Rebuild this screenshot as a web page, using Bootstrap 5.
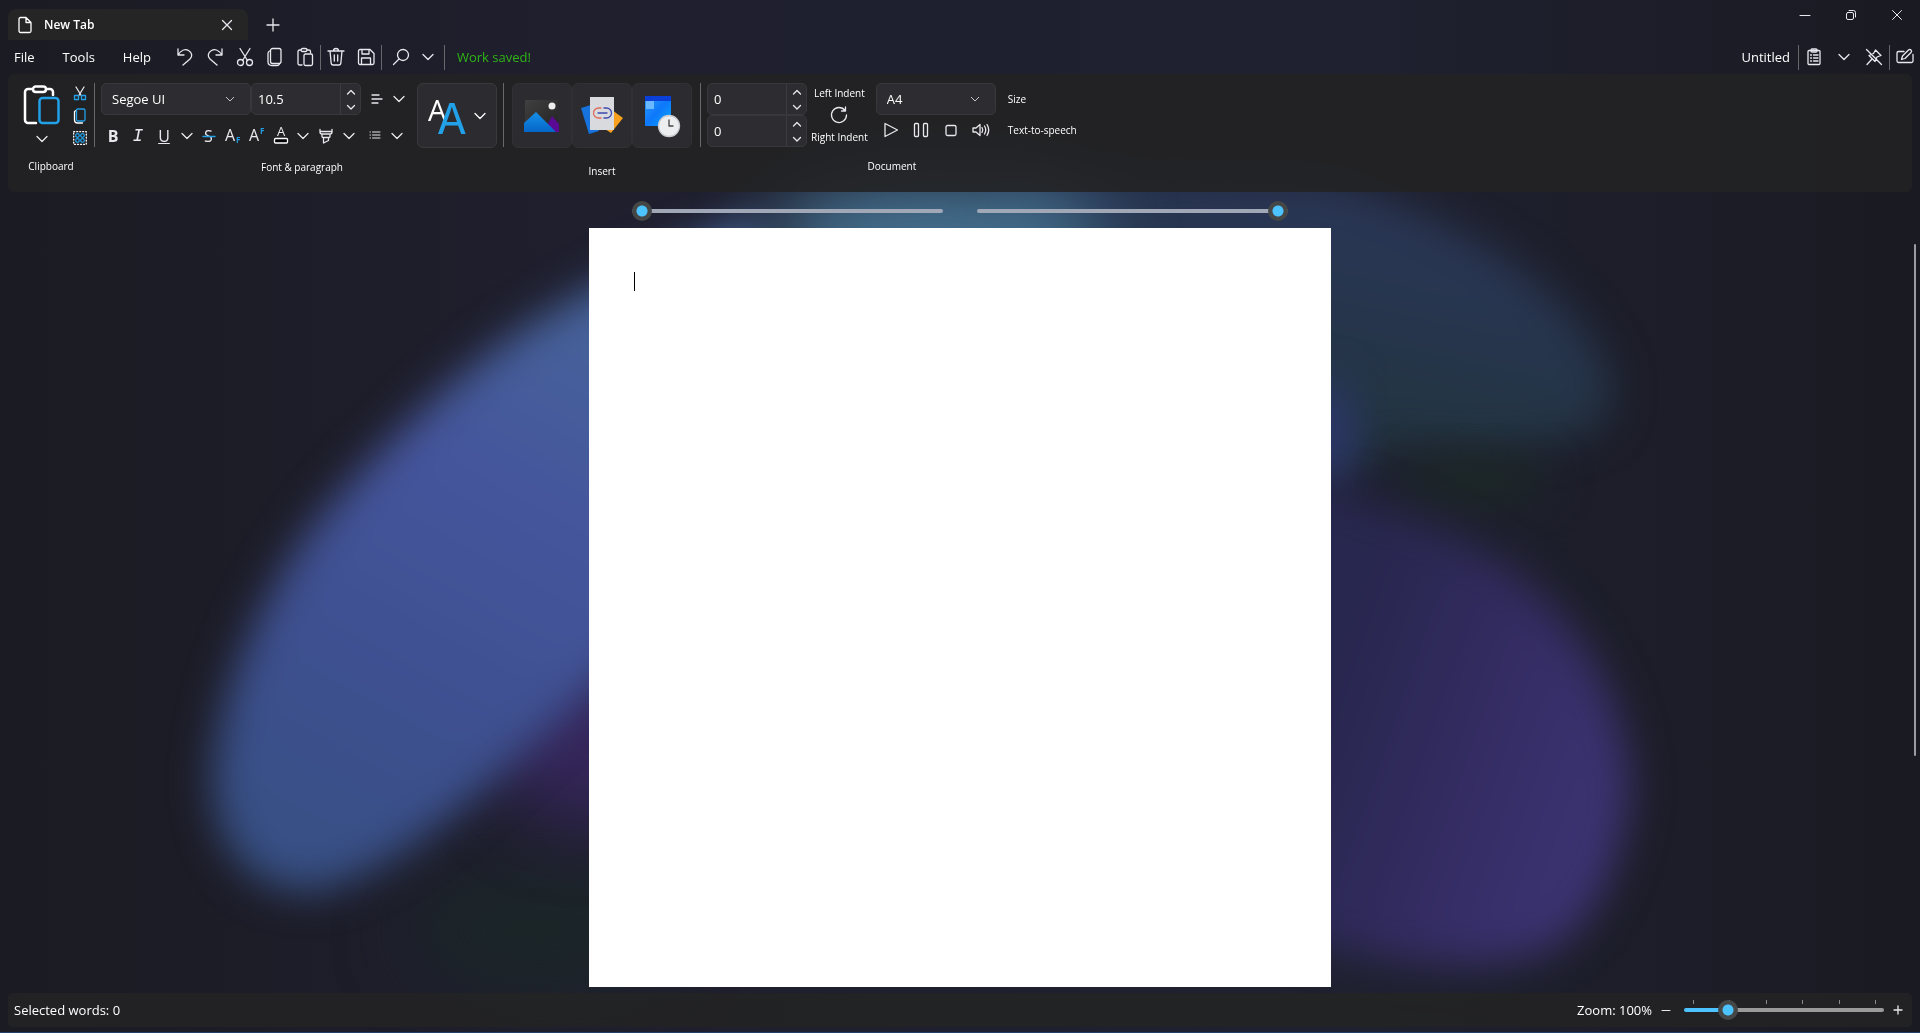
<!DOCTYPE html>
<html lang="en" data-bs-theme="dark">
<head>
<meta charset="utf-8">
<meta name="viewport" content="width=device-width, initial-scale=1">
<title>Untitled</title>
<link rel="stylesheet" href="https://cdn.jsdelivr.net/npm/bootstrap@5.3.0/dist/css/bootstrap.min.css">
<style>
:root{--accent:#4cc2ff;--blue:#22a0e8;--line:#68686c}
body{font-family:"Open Sans","Noto Sans",sans-serif;font-size:13px;line-height:20px;color:#fff;background:#1c1c26;overflow:hidden}
svg{display:block;fill:none;stroke:currentColor;stroke-width:1.3;stroke-linecap:round;stroke-linejoin:round;overflow:visible}
svg.flat,.flat text,svg text{stroke:none}
svg.bold-line{stroke-width:2.5}
svg.thin-line{stroke-width:1}
.backdrop{z-index:-1}
.backdrop svg{stroke:none}
.tool{background:none;border:0;padding:0;color:#e8e8ee;display:flex;align-items:center;justify-content:center;width:30px;height:30px;flex:none}
.tool:hover{background:#ffffff14}
.w-slim{width:24px}
.w-mid{width:26px}
.w-chev{width:20px}
.w-win{width:46px}
.rule{width:1px;background:var(--line);flex:none}
.titlebar{height:40px;padding-left:8px}
.doc-tab{width:240px;height:31px;background:#252525;border-radius:8px 8px 0 0;padding:0 6px 0 10px;font-size:12px;font-weight:600}
.menubar{height:34px;padding-left:14px}
.menubar .rule{height:25px}
.menubar a{color:#fff;text-decoration:none}
.menu-end{margin-right:19px}
.saved{color:#2fb516}
.ribbon{margin:0 8px;height:118px;background:#232324e4;border-radius:6px;padding:9px 0 0 8px}
.group-body{height:64px}
.group-rows{gap:6px}
.group-tight{padding-left:6px}
.clip-tools{padding:0 2px 0 8px}
.caption{font-size:10px;line-height:14px;padding-top:12px;text-align:center}
.tiny{font-size:10px;line-height:14px}
.field{background-color:#2d2d31;border:1px solid #38383c;color:#fff;font-size:13px;line-height:20px;border-radius:5px}
.field:focus{background-color:#2d2d31;box-shadow:none;border-color:#38383c;color:#fff}
select.field{height:32px;padding:0 10px;background-image:url("data:image/svg+xml,%3Csvg xmlns='http://www.w3.org/2000/svg' viewBox='0 0 10 10'%3E%3Cpath d='M1 3l4 4 4-4' fill='none' stroke='%23c4c4c8'/%3E%3C/svg%3E");background-size:10px;background-position:right 15px center}
.font-pick{width:150px}
.size-pick{width:120px}
.spin{height:32px;overflow:hidden;flex:none}
.spin input{background:none;border:0;color:#fff;width:100%;min-width:0;padding:0 6px;outline:0;appearance:textfield;-moz-appearance:textfield}
.spin input::-webkit-inner-spin-button{display:none}
.spin .steps{width:20px;border-left:1px solid #3c3c40;flex:none}
.spin .tool{width:100%;height:15px}
.spin-font{width:110px}
.spin-indent{width:100px}
.tile{background:#2c2c30;border:1px solid #313135;border-radius:6px;color:#fff;padding:0;display:flex;align-items:center;justify-content:center;width:60px;height:65px}
.tile-styles{width:80px;border-color:#3a3a3e;margin:0 6px 0 4px}
.glyph{font-size:16px;line-height:18px}
.glyph-i{font-family:"Liberation Mono",monospace;font-style:italic;font-size:18px}
.workspace{min-height:0;padding:0 8px}
.indents{gap:34px;height:36px;padding-top:9px}
input[type=range]{appearance:none;-webkit-appearance:none;background:none;height:20px;margin:0;display:block}
input[type=range]::-webkit-slider-runnable-track{height:4px;border-radius:2px;background:var(--track)}
input[type=range]::-webkit-slider-thumb{-webkit-appearance:none;width:20px;height:20px;margin-top:-8px;border-radius:50%;border:0;background:radial-gradient(circle,var(--accent) 5px,#454747 6px)}
.indent{width:311px;--track:#a0a8b8}
.zoom{width:200px;--track:linear-gradient(90deg,var(--accent) 24%,#9a9a9a 24%)}
.ticks{left:9px;right:8px;top:0;height:4px}
.ticks i{width:1px;height:4px;background:#8a8a8a}
.sheet{width:742px;background:#fff;padding:44px 45px;color:#000}
.caret{border-left:1px solid #000;height:19px;width:1px}
.scroll-thumb{right:4px;top:52px;width:2px;height:512px;background:#9c9ca2;border-radius:1px;position:absolute}
.status{margin:6px 8px 5px;height:34px;background:#232324e8;border-radius:5px;padding:0 4px 0 6px}
.bottom-line{height:1px;background:#22406c}
.status .tool{width:20px}
</style>
<script src="https://cdn.jsdelivr.net/npm/bootstrap@5.3.0/dist/js/bootstrap.bundle.min.js"></script>
</head>
<body class="vh-100 d-flex flex-column">

<svg class="d-none">
  <symbol id="chev" viewBox="0 0 12 12"><path d="M1 3.500l5 5 5-5"/></symbol>
  <symbol id="chev-s" viewBox="0 0 12 12"><path d="M2.500 4.500l3.500 3.500 3.500-3.500"/></symbol>
  <symbol id="up-s" viewBox="0 0 12 12"><path d="M2.500 8l3.500-3.500 3.500 3.500"/></symbol>
  <symbol id="close" viewBox="0 0 12 12"><path d="M1.500 1.500l9 9M10.500 1.500l-9 9"/></symbol>
  <symbol id="cut" viewBox="0 0 18 20"><path d="M4 1.500l7.500 12M14 1.500L6.500 13.500"/><circle cx="4.500" cy="15.500" r="3"/><circle cx="13.500" cy="15.500" r="3"/></symbol>
  <symbol id="copy" viewBox="0 0 18 20"><path d="M3.500 4C2.500 4.500 2 5.200 2 6.500v8c0 2.500 1.500 4 4 4h5c1.200 0 2-.5 2.500-1.500"/><rect x="4.500" y="1.500" width="10.500" height="15" rx="2"/></symbol>
  <symbol id="paste" viewBox="0 0 18 20"><path d="M6 18H3.500A1.500 1.500 0 0 1 2 16.500v-12A1.500 1.500 0 0 1 3.500 3H5M11 3h2a1.500 1.500 0 0 1 1.500 1.500V6"/><rect x="5" y="1.500" width="6" height="3" rx="1.500"/><rect x="8" y="7" width="8.500" height="11.500" rx="1.500"/></symbol>
</svg>

<!-- Blurred flower wallpaper behind the translucent window -->
<div class="backdrop position-fixed top-0 start-0 w-100 h-100">
<svg width="100%" height="100%" viewBox="0 0 1920 1033" preserveAspectRatio="none">
  <defs>
    <filter id="soft" x="-40%" y="-60%" width="180%" height="220%" color-interpolation-filters="sRGB"><feGaussianBlur stdDeviation="21"/></filter>
    <filter id="wide" x="-80%" y="-100%" width="260%" height="300%" color-interpolation-filters="sRGB"><feGaussianBlur stdDeviation="36"/></filter>
    <linearGradient id="base"><stop offset="0" stop-color="#1b1b23"/><stop offset=".3" stop-color="#1f1f2e"/><stop offset=".7" stop-color="#1f2130"/><stop offset="1" stop-color="#1a1a22"/></linearGradient>
    <linearGradient id="petal" gradientUnits="userSpaceOnUse" x1="600" y1="330" x2="300" y2="880"><stop offset="0" stop-color="#46629a"/><stop offset=".3" stop-color="#45559c"/><stop offset=".65" stop-color="#3e5090"/><stop offset="1" stop-color="#375084"/></linearGradient>
    <linearGradient id="violet" gradientUnits="userSpaceOnUse" x1="1330" y1="700" x2="1620" y2="800"><stop offset="0" stop-color="#28274f"/><stop offset=".5" stop-color="#342c62"/><stop offset="1" stop-color="#3c3474"/></linearGradient>
    <linearGradient id="teal" gradientUnits="userSpaceOnUse" x1="1480" y1="260" x2="1440" y2="450"><stop offset="0" stop-color="#293654"/><stop offset="1" stop-color="#223440"/></linearGradient>
  </defs>
  <rect width="1920" height="1033" fill="url(#base)"/>
  <ellipse cx="540" cy="930" rx="130" ry="60" fill="#1b2628" filter="url(#wide)"/>
  <ellipse cx="600" cy="740" rx="110" ry="85" fill="#35265a" filter="url(#wide)"/>
  <path d="M760 215Q600 275 500 345Q395 425 310 530Q220 660 213 780Q217 885 310 892Q380 880 482 790L620 665L760 500z" fill="url(#petal)" filter="url(#soft)"/>
  <path d="M1000 170L1330 180Q1460 220 1540 285Q1640 375 1600 425Q1520 465 1400 445L1300 480L1000 400z" fill="url(#teal)" filter="url(#soft)"/>
  <ellipse cx="935" cy="235" rx="170" ry="55" fill="#467494" filter="url(#wide)"/>
  <ellipse cx="1322" cy="435" rx="36" ry="56" fill="#2c3768" filter="url(#soft)"/>
  <ellipse cx="1475" cy="480" rx="75" ry="26" fill="#1c2727" filter="url(#soft)"/>
  <path d="M1280 480Q1400 500 1500 562Q1622 650 1630 790Q1615 905 1557 945Q1480 990 1280 935z" fill="url(#violet)" filter="url(#soft)"/>
</svg>
</div>

<header>
  <div class="titlebar d-flex align-items-end">
    <div class="doc-tab d-flex align-items-center">
      <svg width="14" height="18" viewBox="0 0 14 18"><path d="M2.500 1.500H8l5 5V15a1.500 1.500 0 0 1-1.500 1.500h-9A1.500 1.500 0 0 1 1 15V3a1.500 1.500 0 0 1 1.500-1.500zM8 1.500v5h5"/></svg>
      <span class="flex-grow-1 ps-2 ms-1">New Tab</span>
      <button class="tool" aria-label="Close tab"><svg width="12" height="12"><use href="#close"/></svg></button>
    </div>
    <button class="tool ms-2 ps-1" aria-label="New tab"><svg width="14" height="14" viewBox="0 0 14 14"><path d="M7 1v12M1 7h12"/></svg></button>
    <div class="ms-auto align-self-start d-flex">
      <button class="tool w-win" aria-label="Minimize"><svg class="thin-line" width="12" height="12" viewBox="0 0 12 12"><path d="M1 6.500h10"/></svg></button>
      <button class="tool w-win" aria-label="Restore"><svg class="thin-line" width="12" height="12" viewBox="0 0 12 12"><rect x="1.500" y="3.500" width="7" height="7" rx="1.500"/><path d="M4 1.500h4.500a2 2 0 0 1 2 2V8"/></svg></button>
      <button class="tool w-win" aria-label="Close"><svg class="thin-line" width="12" height="12"><use href="#close"/></svg></button>
    </div>
  </div>

  <nav class="menubar d-flex align-items-center">
    <a href="#">File</a><a href="#" class="ps-4 ms-1">Tools</a><a href="#" class="ps-4 ms-1 menu-end">Help</a>
    <button class="tool" aria-label="Undo"><svg width="18" height="20" viewBox="0 0 18 20"><path d="M2 2v6h6M2.300 7.500C5 3.500 9 1.500 12.500 3.500c4 2.300 4 6 1.500 8.500l-7 6"/></svg></button>
    <button class="tool" aria-label="Redo"><svg width="18" height="20" viewBox="0 0 18 20"><path d="M16 2v6h-6M15.700 7.500C13 3.500 9 1.500 5.500 3.500c-4 2.300-4 6-1.500 8.500l7 6"/></svg></button>
    <button class="tool" aria-label="Cut"><svg width="18" height="20"><use href="#cut"/></svg></button>
    <button class="tool" aria-label="Copy"><svg width="18" height="20"><use href="#copy"/></svg></button>
    <button class="tool" aria-label="Paste"><svg width="18" height="20"><use href="#paste"/></svg></button>
    <div class="rule"></div>
    <button class="tool" aria-label="Delete"><svg width="18" height="20" viewBox="0 0 18 20"><path d="M1 4h16M3 4l1.200 12.500a2 2 0 0 0 2 1.500h5.600a2 2 0 0 0 2-1.500L15 4M6.500 4a2.500 2.500 0 0 1 5 0M7.300 8v6M10.700 8v6"/></svg></button>
    <button class="tool" aria-label="Save"><svg width="18" height="20" viewBox="0 0 18 20"><path d="M3 2.500h10l4 4V16a1.500 1.500 0 0 1-1.500 1.500h-13A1.500 1.500 0 0 1 1.500 16V4A1.500 1.500 0 0 1 3 2.500zM5 2.500v4.500h7V2.500M4.500 17.500V11h9v6.500"/></svg></button>
    <div class="rule"></div>
    <button class="tool ms-1" aria-label="Find"><svg width="18" height="18" viewBox="0 0 18 18"><circle cx="11" cy="7" r="5.500"/><path d="M7 11l-5.500 5.500"/></svg></button>
    <button class="tool w-slim" aria-label="Find options"><svg width="12" height="12"><use href="#chev"/></svg></button>
    <div class="rule ms-1"></div>
    <span class="saved ms-2 ps-1">Work saved!</span>
    <span class="ms-auto me-2">Untitled</span>
    <div class="rule"></div>
    <button class="tool" aria-label="Notes"><svg width="16" height="18" viewBox="0 0 16 18"><rect x="2" y="2.500" width="12" height="14" rx="1"/><rect x="5" y="1" width="6" height="3" rx="1"/><path d="M4.500 7h1M7.500 7H12M4.500 10h1M7.500 10H12M4.500 13h1M7.500 13H12"/></svg></button>
    <button class="tool" aria-label="Notes options"><svg width="12" height="12"><use href="#chev"/></svg></button>
    <button class="tool" aria-label="Unpin"><svg width="18" height="18" viewBox="0 0 18 18"><path d="M1.500 1.500l15 15M10.500 2l5.500 5.500-4 1.500-2 4.500-6-6L8.500 5.500zM7 11l-5 5.500"/></svg></button>
    <div class="rule"></div>
    <button class="tool" aria-label="Edit mode"><svg width="18" height="18" viewBox="0 0 18 18"><path d="M8 3.500H2.500A1.500 1.500 0 0 0 1 5v8a1.500 1.500 0 0 0 1.500 1.500h13A1.500 1.500 0 0 0 17 13V6.500M5.500 11.500l1-3.500 6-6a1.500 1.500 0 0 1 2.500 2.500L9 10.500z"/></svg></button>
  </nav>
</header>

<section class="ribbon d-flex align-items-start">
  <div>
    <div class="group-body d-flex">
      <button class="tool h-100 flex-column w-auto ps-2 gap-2" aria-label="Paste">
        <svg class="bold-line" width="36" height="40" viewBox="0 0 36 40"><path d="M12 38H4a3 3 0 0 1-3-3V7a3 3 0 0 1 3-3h4M22 4h4a3 3 0 0 1 3 3v3" stroke="#fff"/><rect x="9" y="1.500" width="13" height="5.500" rx="2.700" stroke="#fff"/><rect x="15.500" y="13" width="19" height="25" rx="3" stroke="#22a0e8"/></svg>
        <svg width="12" height="12"><use href="#chev"/></svg>
      </button>
      <div class="clip-tools d-flex flex-column justify-content-between">
        <button class="tool h-auto w-slim" aria-label="Cut"><svg width="14" height="20" viewBox="0 0 14 20"><path d="M3 4l5.500 9M11 4l-5.500 9"/><path d="M1.500 12.500h4v4h-4zM8.500 12.500h4v4h-4z" stroke="#22a0e8"/></svg></button>
        <button class="tool h-auto w-slim" aria-label="Copy"><svg width="14" height="18" viewBox="0 0 14 18"><path d="M3 3.500l-1.500 1v8.500q0 3 3 3h5" stroke="#fff"/><rect x="3.500" y="2" width="8.500" height="12" rx="1.500" stroke="#22a0e8"/></svg></button>
        <button class="tool h-auto w-slim" aria-label="Select all"><svg width="14" height="18" viewBox="0 0 14 18"><rect x=".7" y="2.700" width="12.600" height="12.600" stroke="#fff" stroke-dasharray="1 2"/><g stroke="#22a0e8"><circle cx="4.500" cy="6.500" r="1.800"/><circle cx="9.500" cy="6.500" r="1.800"/><circle cx="4.500" cy="11.500" r="1.800"/><circle cx="9.500" cy="11.500" r="1.800"/></g></svg></button>
      </div>
    </div>
    <div class="caption pe-2">Clipboard</div>
  </div>
  <div class="rule group-body"></div>
  <div class="group-tight">
    <div class="d-flex">
      <div class="group-body group-rows d-flex flex-column">
        <div class="d-flex align-items-center">
          <select class="form-select field font-pick" aria-label="Font"><option>Segoe UI</option></select>
          <div class="field spin spin-font d-flex">
            <input type="number" value="10.5" step="0.5" aria-label="Font size">
            <div class="steps"><button class="tool" aria-label="Larger"><svg width="12" height="12"><use href="#up-s"/></svg></button><button class="tool" aria-label="Smaller"><svg width="12" height="12"><use href="#chev-s"/></svg></button></div>
          </div>
          <button class="tool ms-1 w-slim" aria-label="Alignment"><svg width="12" height="12" viewBox="0 0 12 12"><path d="M1 2h7M1 6h10M1 10h6"/></svg></button>
          <button class="tool w-chev" aria-label="Alignment options"><svg width="12" height="12"><use href="#chev"/></svg></button>
        </div>
        <div class="d-flex align-items-center">
          <button class="tool w-slim fw-bold glyph" aria-label="Bold">B</button>
          <button class="tool w-mid glyph-i" aria-label="Italic">I</button>
          <button class="tool w-mid" aria-label="Underline"><span class="glyph text-decoration-underline">U</span></button>
          <button class="tool w-chev" aria-label="Underline options"><svg width="12" height="12"><use href="#chev"/></svg></button>
          <button class="tool w-slim" aria-label="Strikethrough"><svg width="14" height="18" viewBox="0 0 14 18"><text x="2" y="15" font-size="16" fill="#e8e8ee">S</text><path d="M1 9.500h12" stroke="#22a0e8"/></svg></button>
          <button class="tool w-slim" aria-label="Subscript"><svg class="flat" width="18" height="18" viewBox="0 0 18 18"><text x="1" y="14" font-size="16" fill="#e8e8ee">A</text><text x="12" y="16" font-size="8" font-weight="700" fill="#22a0e8">F</text></svg></button>
          <button class="tool w-slim" aria-label="Superscript"><svg class="flat" width="18" height="18" viewBox="0 0 18 18"><text x="1" y="14" font-size="16" fill="#e8e8ee">A</text><text x="12" y="7" font-size="8" font-weight="700" fill="#22a0e8">F</text></svg></button>
          <button class="tool w-slim" aria-label="Text colour"><svg width="16" height="18" viewBox="0 0 16 18"><text x="4" y="9" font-size="13" fill="#e8e8ee">A</text><rect x="1.500" y="11.500" width="13" height="4.500" rx="1" fill="#000" stroke="#fff"/></svg></button>
          <button class="tool w-chev" aria-label="Text colour options"><svg width="12" height="12"><use href="#chev"/></svg></button>
          <button class="tool w-mid" aria-label="Highlight"><svg width="14" height="18" viewBox="0 0 14 18"><path d="M1 2.500V5q0 2 2 2h8q2 0 2-2V2.500M1 4.500h12M3 7v2.500q0 1 1 1h6q1 0 1-1V7M4.500 10.500V16l5-2.500v-3"/></svg></button>
          <button class="tool w-chev" aria-label="Highlight options"><svg width="12" height="12"><use href="#chev"/></svg></button>
          <button class="tool ms-1 w-slim" aria-label="List"><svg class="thin-line" width="12" height="12" viewBox="0 0 12 12"><path d="M1 2h.5M3.500 2H11M1 5h.5M3.500 5H11M1 8h.5M3.500 8H11"/></svg></button>
          <button class="tool w-chev" aria-label="List options"><svg width="12" height="12"><use href="#chev"/></svg></button>
        </div>
      </div>
      <button class="tile tile-styles ms-2 gap-2" aria-label="Text styles">
        <svg class="flat" width="38" height="40" viewBox="0 0 38 40"><text x="0" y="25" font-size="29" fill="#fff" font-family="Open Sans">A</text><text x="10" y="38" font-size="46" font-family="Liberation Mono" fill="#22a0e8">A</text></svg>
        <svg width="12" height="12"><use href="#chev"/></svg>
      </button>
    </div>
    <div class="caption">Font &amp; paragraph</div>
  </div>
  <div class="rule group-body"></div>
  <div class="px-2">
    <div class="d-flex">
      <button class="tile" aria-label="Insert picture"><svg class="flat" width="36" height="36" viewBox="0 0 36 36"><defs><linearGradient id="pic" x1="0" y1="0" x2="1" y2="1"><stop stop-color="#404040"/><stop offset="1" stop-color="#222"/></linearGradient><linearGradient id="hill" x2="0" y2="1"><stop stop-color="#1690e8"/><stop offset="1" stop-color="#0566c8"/></linearGradient></defs><path d="M1 2h33v32H1z" fill="url(#pic)"/><path d="M20 34l8-16 7 8v8z" fill="#5b0a94"/><path d="M0 34v-9l12-11 20 20z" fill="url(#hill)"/><circle cx="28" cy="8" r="3.500" fill="#eee"/></svg></button>
      <button class="tile" aria-label="Insert link"><svg width="44" height="40" viewBox="0 0 44 40"><path d="M1 12l10-3 8 26-10 3z" fill="#1672dc" stroke="none"/><path d="M32 14l11 8-12 15-12-8z" fill="#f6a01e" stroke="none"/><path d="M10 1h24v33H10z" fill="#d9dade" stroke="none"/><path d="M21 12h-2.500a5 5 0 0 0 0 10H21" stroke="#df6a5a"/><path d="M24 12h2.500a5 5 0 0 1 0 10H24M18 17h9" stroke="#3d48b0"/></svg></button>
      <button class="tile" aria-label="Insert date and time"><svg width="38" height="42" viewBox="0 0 38 42"><defs><linearGradient id="cal" x2="1" y2="1"><stop stop-color="#2b9cff"/><stop offset=".5" stop-color="#0d78fa"/><stop offset="1" stop-color="#0aa4ff"/></linearGradient></defs><path d="M2 1h26v30H2z" fill="url(#cal)" stroke="none"/><path d="M2 1h26v5H2z" fill="#0a3fd8" stroke="none"/><path d="M3 6h8v8H3z" fill="#6ab8ff" stroke="none"/><circle cx="26" cy="31" r="10.500" fill="#eceef0" stroke="#c9ccd0"/><path d="M26 25v6h4" stroke="#444"/></svg></button>
    </div>
    <div class="caption pt-3">Insert</div>
  </div>
  <div class="rule group-body"></div>
  <div class="group-tight">
    <div class="d-flex">
      <div class="me-1">
        <div class="field spin spin-indent d-flex">
          <input type="number" value="0" aria-label="Left indent">
          <div class="steps"><button class="tool" aria-label="More left indent"><svg width="12" height="12"><use href="#up-s"/></svg></button><button class="tool" aria-label="Less left indent"><svg width="12" height="12"><use href="#chev-s"/></svg></button></div>
        </div>
        <div class="field spin spin-indent d-flex">
          <input type="number" value="0" aria-label="Right indent">
          <div class="steps"><button class="tool" aria-label="More right indent"><svg width="12" height="12"><use href="#up-s"/></svg></button><button class="tool" aria-label="Less right indent"><svg width="12" height="12"><use href="#chev-s"/></svg></button></div>
        </div>
      </div>
      <div class="group-body d-flex flex-column align-items-center justify-content-center tiny me-2">
        <span>Left Indent</span>
        <button class="tool" aria-label="Reset indents"><svg width="18" height="18" viewBox="0 0 18 18"><path d="M15 4.500A7.500 7.500 0 1 0 16.500 9M15.500 1v4h-4"/></svg></button>
        <span>Right Indent</span>
      </div>
      <div>
        <div class="d-flex align-items-center">
          <select id="paper" class="form-select field size-pick"><option>A4</option></select>
          <label for="paper" class="tiny ps-2 ms-1">Size</label>
        </div>
        <div class="d-flex align-items-center">
          <button class="tool" aria-label="Play"><svg width="16" height="18" viewBox="0 0 16 18"><path d="M2 2.500v13L14.500 9z"/></svg></button>
          <button class="tool" aria-label="Pause"><svg width="16" height="18" viewBox="0 0 16 18"><rect x="1.500" y="2.500" width="4" height="13" rx="1"/><rect x="10.500" y="2.500" width="4" height="13" rx="1"/></svg></button>
          <button class="tool" aria-label="Stop"><svg width="14" height="14" viewBox="0 0 14 14"><rect x="2" y="2.500" width="10" height="10" rx="1.500"/></svg></button>
          <button class="tool" aria-label="Read aloud"><svg width="18" height="18" viewBox="0 0 18 18"><path d="M1 7v4h3l4 3.500v-11L4 7zM10 6.500q1.500 2.500 0 5M12.500 5q2.500 4 0 8M15 3.500q3.500 5.500 0 11"/></svg></button>
          <span class="tiny ps-2 ms-1">Text-to-speech</span>
        </div>
      </div>
    </div>
    <div class="caption">Document</div>
  </div>
</section>

<main class="workspace flex-grow-1 d-flex flex-column align-items-center position-relative">
  <div class="indents d-flex">
    <input class="indent" type="range" min="0" max="100" value="0" aria-label="Left indent">
    <input class="indent" type="range" min="0" max="100" value="100" aria-label="Right indent">
  </div>
  <div class="sheet flex-grow-1" role="textbox" aria-label="Document text"><div class="caret"></div></div>
  <div class="scroll-thumb"></div>
</main>

<footer>
  <div class="status d-flex align-items-center">
    <span>Selected words: 0</span>
    <label for="zoom" class="ms-auto me-1">Zoom: 100%</label>
    <button class="tool me-2" aria-label="Zoom out"><svg class="thin-line" width="10" height="10" viewBox="0 0 10 10"><path d="M1 5.500h8"/></svg></button>
    <div class="position-relative">
      <div class="ticks position-absolute d-flex justify-content-between"><i></i><i></i><i></i><i></i><i></i><i></i></div>
      <input id="zoom" class="zoom position-relative" type="range" min="0" max="100" value="19">
    </div>
    <button class="tool ms-1" aria-label="Zoom in"><svg width="10" height="10" viewBox="0 0 10 10"><path d="M5 1v8M1 5h8"/></svg></button>
  </div>
  <div class="bottom-line"></div>
</footer>
</body>
</html>
